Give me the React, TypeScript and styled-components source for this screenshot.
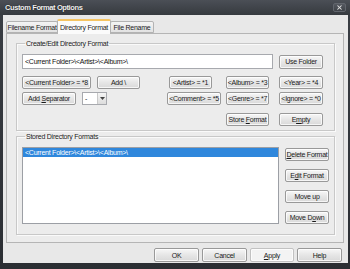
import styled, { createGlobalStyle } from "styled-components";
import { X } from "lucide-react";

const GlobalStyle = createGlobalStyle`
  * { box-sizing: border-box; }
  html, body { margin: 0; padding: 0; background: #2e3136; }
  body {
    font-family: "Liberation Sans", Arial, sans-serif;
    font-size: 7px;
    letter-spacing: -0.25px;
    color: #1c1c1c;
  }
`;

const Window = styled.div`
  width: 350px;
  height: 269px;
  display: flex;
  flex-direction: column;
  background: linear-gradient(#3a3e44, #2b2e33);
`;

const TitleBar = styled.div`
  height: 15px;
  display: flex;
  align-items: center;
  justify-content: space-between;
  padding: 0 4px 0 5px;
  background: linear-gradient(#4b4f56, #363a3f);
`;

const Title = styled.span`
  color: #f2f2f2;
  font-weight: bold;
  font-size: 7.5px;
  letter-spacing: -0.4px;
  text-shadow: 0 0 1px #000;
`;

const CloseButton = styled.div`
  width: 13px;
  height: 9px;
  display: flex;
  align-items: center;
  justify-content: center;
  border: 1px solid #62666d;
  border-radius: 2px;
  background: linear-gradient(#555960, #3e4248);
  color: #e4e4e4;
`;

const Body = styled.div`
  flex: 1;
  margin: 0 2px 6px 3px;
  padding: 4px 4px 0 3px;
  background: #e8e8e8;
  display: flex;
  flex-direction: column;
`;

const TabStrip = styled.div`
  height: 14px;
  display: flex;
  align-items: flex-end;
`;

const Tab = styled.div<{ $w: number; $active?: boolean }>`
  width: ${(p) => p.$w}px;
  height: ${(p) => (p.$active ? 15 : 12)}px;
  margin-bottom: ${(p) => (p.$active ? -1 : 0)}px;
  position: relative;
  z-index: ${(p) => (p.$active ? 1 : 0)};
  display: flex;
  align-items: center;
  justify-content: center;
  border: 1px solid #b3b3b3;
  border-bottom: ${(p) => (p.$active ? "none" : "1px solid #b3b3b3")};
  border-top: ${(p) => (p.$active ? "2px solid #f5c463" : "1px solid #b3b3b3")};
  border-radius: 2px 2px 0 0;
  background: ${(p) =>
    p.$active ? "#fbfbfb" : "linear-gradient(#f4f4f4, #e2e2e2)"};
  & + & {
    margin-left: -1px;
  }
`;

const Panel = styled.div`
  height: 210px;
  border: 1px solid #b5b5b5;
  background: #ececec;
  padding: 5px 8px 7px 9px;
  display: flex;
  flex-direction: column;
`;

const Group = styled.fieldset<{ $grow?: boolean }>`
  margin: ${(p) => (p.$grow ? "1px 0 0 0" : "0")};
  padding: 6px 5px ${(p) => (p.$grow ? 8 : 4)}px 5px;
  min-width: 0;
  border: 1px solid #c8c8c8;
  box-shadow: inset 1px 1px 0 #fafafa, 1px 1px 0 #fafafa;
  flex: ${(p) => (p.$grow ? 1 : "none")};
  display: flex;
  flex-direction: column;
`;

const Legend = styled.legend`
  padding: 0 1px;
  margin-left: 3px;
  line-height: 9px;
  color: #222;
`;

const Row = styled.div<{ $gap: number }>`
  display: flex;
  align-items: center;
  gap: ${(p) => p.$gap}px;
`;

const TextField = styled.input`
  width: 251px;
  height: 15px;
  border: 1px solid #a7a9ae;
  background: #fff;
  padding: 0 2px;
  font: inherit;
  letter-spacing: inherit;
  color: #111;
  outline: none;
`;

const Button = styled.button<{ $w: number; $h?: number; $flat?: boolean }>`
  width: ${(p) => p.$w}px;
  height: ${(p) => p.$h ?? 13}px;
  padding: 0;
  font: inherit;
  letter-spacing: inherit;
  color: #1a1a1a;
  white-space: nowrap;
  overflow: hidden;
  border: 1px solid ${(p) => (p.$flat ? "#c2c2c2" : "#999")};
  border-radius: 2px;
  background: ${(p) =>
    p.$flat ? "#f3f3f3" : "linear-gradient(#f7f7f7, #e6e6e6 50%, #d9d9d9)"};
  box-shadow: inset 0 0 0 1px rgba(255, 255, 255, 0.75);
`;

const ButtonGrid = styled.div`
  margin-top: 7px;
  display: grid;
  grid-template-columns: 69px 6px 43px 30px 42px 14px 43px 10px 44px;
  grid-template-rows: 13px 13px 18px;
  row-gap: 3px;
  align-items: end;
`;

const Cell = styled.div<{ $col: string; $end?: boolean; $shift?: number }>`
  grid-column: ${(p) => p.$col};
  display: flex;
  gap: 6px;
  justify-content: ${(p) => (p.$end ? "flex-end" : "flex-start")};
  margin-right: ${(p) => p.$shift ?? 0}px;
`;

const Combo = styled.div`
  width: 25px;
  height: 13px;
  display: flex;
  border: 1px solid #a7a9ae;
  background: #fff;
`;

const ComboText = styled.span`
  flex: 1;
  padding-left: 2px;
  line-height: 11px;
`;

const ComboArrow = styled.span`
  width: 9px;
  display: flex;
  align-items: center;
  justify-content: center;
  border-left: 1px solid #c9c9c9;
  background: linear-gradient(#f5f5f5, #dcdcdc);
`;

const ListBox = styled.div`
  flex: 1;
  border: 1px solid #9c9fa5;
  background: #fff;
`;

const ListItem = styled.div<{ $selected?: boolean }>`
  height: 9px;
  line-height: 9px;
  padding-left: 2px;
  background: ${(p) => (p.$selected ? "#2f87dc" : "transparent")};
  color: ${(p) => (p.$selected ? "#fff" : "#111")};
`;

const SideButtons = styled.div`
  padding-top: 1px;
  display: flex;
  flex-direction: column;
  gap: 8px;
`;

const Footer = styled.div`
  margin-top: 5px;
  padding-right: 2px;
  display: flex;
  justify-content: flex-end;
  gap: 3px;
`;

const path = "<Current Folder>\\<Artist>\\<Album>\\";

export default function App() {
  return (
    <>
      <GlobalStyle />
      <Window>
        <TitleBar>
          <Title>Custom Format Options</Title>
          <CloseButton>
            <X size={7} strokeWidth={3.5} />
          </CloseButton>
        </TitleBar>
        <Body>
          <TabStrip>
            <Tab $w={52}>Filename Format</Tab>
            <Tab $w={54} $active>
              Directory Format
            </Tab>
            <Tab $w={44}>File Rename</Tab>
          </TabStrip>
          <Panel>
            <Group>
              <Legend>Create/Edit Directory Format</Legend>
              <Row $gap={6}>
                <TextField readOnly value={path} />
                <Button $w={44} $h={14}>
                  Use Folder
                </Button>
              </Row>
              <ButtonGrid>
                <Cell $col="1">
                  <Button $w={69}>&lt;Current Folder&gt; = *8</Button>
                </Cell>
                <Cell $col="3">
                  <Button $w={43}>Add \</Button>
                </Cell>
                <Cell $col="4 / 6" $end>
                  <Button $w={43}>&lt;Artist&gt; = *1</Button>
                </Cell>
                <Cell $col="7">
                  <Button $w={43}>&lt;Album&gt; = *3</Button>
                </Cell>
                <Cell $col="9">
                  <Button $w={44}>&lt;Year&gt; = *4</Button>
                </Cell>

                <Cell $col="1 / 4">
                  <Button $w={54}>
                    Add <u>S</u>eparator
                  </Button>
                  <Combo>
                    <ComboText>-</ComboText>
                    <ComboArrow>
                      <svg width="5" height="3" viewBox="0 0 5 3">
                        <polygon points="0,0 5,0 2.5,3" fill="#444" />
                      </svg>
                    </ComboArrow>
                  </Combo>
                </Cell>
                <Cell $col="4 / 7" $end $shift={5}>
                  <Button $w={54}>&lt;Comment&gt; = *5</Button>
                </Cell>
                <Cell $col="7">
                  <Button $w={43}>&lt;Genre&gt; = *7</Button>
                </Cell>
                <Cell $col="9">
                  <Button $w={44}>&lt;Ignore&gt; = *0</Button>
                </Cell>

                <Cell $col="7">
                  <Button $w={43}>
                    Store <u>F</u>ormat
                  </Button>
                </Cell>
                <Cell $col="9">
                  <Button $w={44}>
                    E<u>m</u>pty
                  </Button>
                </Cell>
              </ButtonGrid>
            </Group>
            <Group $grow>
              <Legend>Stored Directory Formats</Legend>
              <Row $gap={6} style={{ flex: 1, alignItems: "stretch" }}>
                <ListBox>
                  <ListItem $selected>{path}</ListItem>
                </ListBox>
                <SideButtons>
                  <Button $w={44}>
                    <u>D</u>elete Format
                  </Button>
                  <Button $w={44}>
                    E<u>d</u>it Format
                  </Button>
                  <Button $w={44}>Move up</Button>
                  <Button $w={44}>
                    Move D<u>o</u>wn
                  </Button>
                </SideButtons>
              </Row>
            </Group>
          </Panel>
          <Footer>
            <Button $w={45} $h={14}>
              OK
            </Button>
            <Button $w={45} $h={14}>
              Cancel
            </Button>
            <Button $w={44} $h={14} $flat>
              <u>A</u>pply
            </Button>
            <Button $w={45} $h={14}>
              Help
            </Button>
          </Footer>
        </Body>
      </Window>
    </>
  );
}
